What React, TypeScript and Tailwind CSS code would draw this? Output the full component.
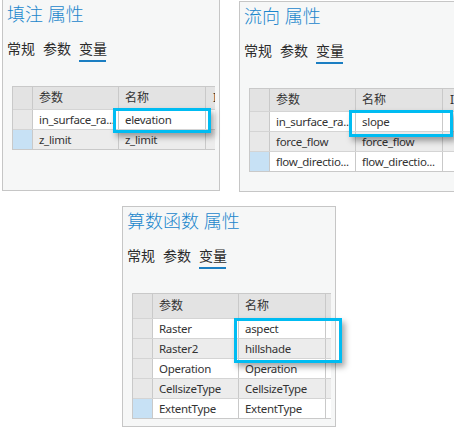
import type { CSSProperties } from 'react'

type Row = [string, string]

interface PanelProps {
  title: string
  rows: Row[]
  headerHeight: number
  box: { left: number; top: number; width: number; height: number }
  className: string
}

const TABS = ['常规', '参数', '变量'] as const

function VariableTable({ rows, headerHeight }: { rows: Row[]; headerHeight: number }) {
  return (
    <div
      className="ml-[5px] mt-[27px] overflow-hidden border-l border-t border-b border-[#c9c9c9]"
      style={{ fontFamily: '"Noto Sans", "Noto Sans CJK SC", sans-serif' }}
    >
      <div className="flex w-[260px] bg-[#e3e3e3] text-[12px] text-[#333]" style={{ height: headerHeight }}>
        <div className="w-[20px] shrink-0 border-r border-[#c9c9c9]" />
        <div className="w-[86px] shrink-0 border-r border-[#c9c9c9] pl-[6px] flex items-center">参数</div>
        <div className="w-[87px] shrink-0 border-r border-[#c9c9c9] pl-[6px] flex items-center">名称</div>
        <div className="flex-1 pl-[7px] flex items-center">Is</div>
      </div>
      {rows.map(([param, name], i) => {
        const last = i === rows.length - 1
        const shaded = i % 2 === 1
        return (
          <div
            key={param + i}
            className={`flex h-[20px] w-[260px] border-t border-[#d4d4d4] text-[11.5px] tracking-[-0.3px] text-[#333] ${
              shaded ? 'bg-[#ececec]' : 'bg-white'
            }`}
          >
            <div
              className={`w-[20px] shrink-0 border-r border-[#c9c9c9] ${
                last ? 'bg-[#c7e1f5]' : 'bg-[#e8e8e8]'
              }`}
            />
            <div className="w-[86px] shrink-0 border-r border-[#c9c9c9] pl-[6px] flex items-center whitespace-nowrap overflow-hidden">
              {param}
            </div>
            <div className="w-[87px] shrink-0 border-r border-[#c9c9c9] pl-[6px] flex items-center whitespace-nowrap overflow-hidden">
              {name}
            </div>
            <div className="flex-1" />
          </div>
        )
      })}
    </div>
  )
}

function PropertiesPanel({ title, rows, headerHeight, box, className }: PanelProps) {
  const boxStyle: CSSProperties = {
    left: box.left,
    top: box.top,
    width: box.width,
    height: box.height,
  }
  return (
    <div className={`relative shrink-0 bg-[#f6f7f7] border-[#c6c6c6] ${className}`}>
      <div className="h-full overflow-hidden px-[4px] pt-[2px]">
        <h1 className="text-[18px] leading-[24px] font-light text-[#1a86cc] whitespace-nowrap">{title}</h1>
        <div className="mt-[13px] flex gap-[8px] text-[14px] leading-[20px] text-[#2b2b2b]">
          {TABS.map((t) => (
            <div key={t} className="relative">
              {t}
              {t === '变量' && (
                <div className="absolute left-[0px] right-[1px] top-[21px] h-[2px] bg-[#1b7ec2]" />
              )}
            </div>
          ))}
        </div>
        <VariableTable rows={rows} headerHeight={headerHeight} />
      </div>
      {/* highlighted name cells */}
      <div
        className="absolute border-[3px] border-[#00bcf2] shadow-[3px_4px_6px_rgba(0,0,0,0.35)]"
        style={boxStyle}
      />
    </div>
  )
}

export default function App() {
  return (
    <div
      className="w-[454px] h-[427px] overflow-hidden bg-white"
      style={{ fontFamily: '"Noto Sans", "Noto Sans CJK SC", sans-serif' }}
    >
      <div className="flex items-start">
        <PropertiesPanel
          title="填注 属性"
          headerHeight={22}
          rows={[
            ['in_surface_ra...', 'elevation'],
            ['z_limit', 'z_limit'],
          ]}
          box={{ left: 110, top: 108, width: 98, height: 25 }}
          className="ml-[2px] w-[218px] h-[191px] border-l border-r border-b"
        />
        <PropertiesPanel
          title="流向 属性"
          headerHeight={22}
          rows={[
            ['in_surface_ra...', 'slope'],
            ['force_flow', 'force_flow'],
            ['flow_directio...', 'flow_directio...'],
          ]}
          box={{ left: 109, top: 108, width: 104, height: 27 }}
          className="ml-[19px] mt-[1px] w-[230px] h-[191px] border-l border-t border-b"
        />
      </div>
      <PropertiesPanel
        title="算数函数 属性"
        headerHeight={24}
        rows={[
          ['Raster', 'aspect'],
          ['Raster2', 'hillshade'],
          ['Operation', 'Operation'],
          ['CellsizeType', 'CellsizeType'],
          ['ExtentType', 'ExtentType'],
        ]}
        box={{ left: 111, top: 111, width: 108, height: 45 }}
        className="ml-[122px] mt-[14px] w-[214px] h-[221px] border"
      />
    </div>
  )
}
